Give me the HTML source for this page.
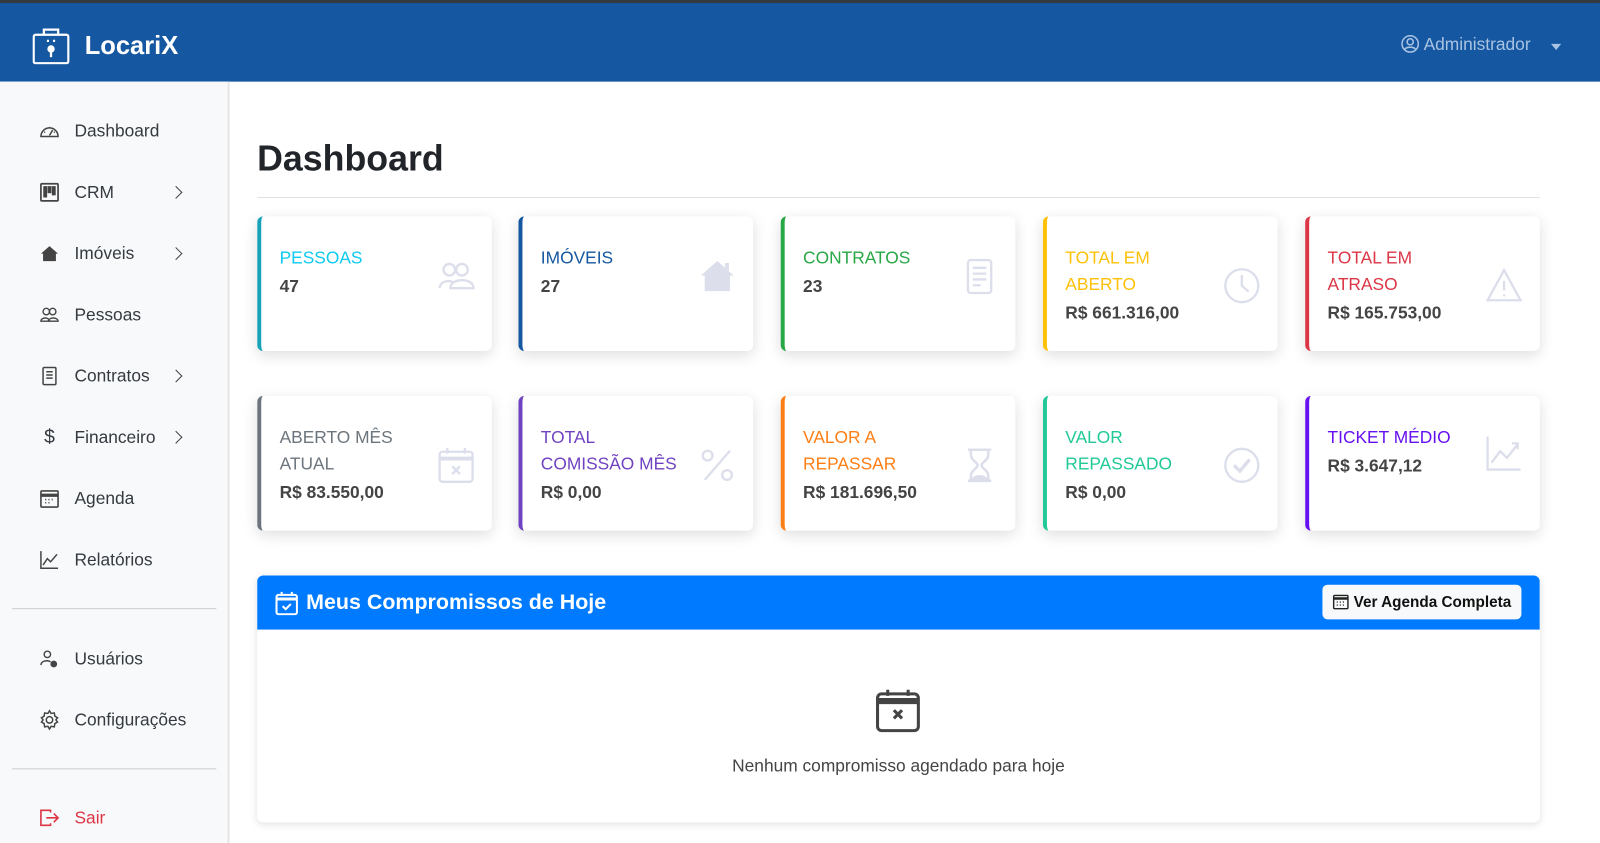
<!DOCTYPE html>
<html><head><meta charset="utf-8">
<style>
*{box-sizing:border-box;margin:0;padding:0}
body{width:1600px;height:826px;overflow:hidden;background:#fff;font-family:"Liberation Sans",sans-serif;color:#212529}
#w{position:relative;width:1568px;height:810px;transform:scale(1.0204);transform-origin:0 0}
.top{position:absolute;left:0;top:0;width:1568px;height:80px;background:#1557a0;border-top:3px solid #343a40}
.logo{position:absolute;left:32px;top:24px}
.brand{position:absolute;left:83px;top:28px;color:#fff;font-weight:bold;font-size:25px}
.admin{position:absolute;right:68px;top:31px;color:#a9c3e3;font-size:17px}
.caret{position:absolute;right:38px;top:40px;width:0;height:0;border-left:5px solid transparent;border-right:5px solid transparent;border-top:6px solid #a9c3e3}
.side{position:absolute;left:0;top:80px;width:225px;height:746px;background:#f8f9fa;border-right:2px solid #e6e6e6}
.nav{position:absolute;left:38px;font-size:17px;color:#343a40;display:flex;align-items:center}
.nav svg{width:21px;height:21px;margin-right:14px}
.chev{position:absolute;left:168px;width:9px;height:9px;border-right:1.6px solid #444;border-top:1.6px solid #444;transform:rotate(45deg)}
.hr{position:absolute;left:12px;width:200px;height:1px;background:#ccc}
h1{position:absolute;left:252px;top:136px;font-size:35px;font-weight:bold;color:#212529}
.line{position:absolute;left:252px;top:193px;width:1257px;height:1px;background:#dee2e6}
.card{position:absolute;width:230px;height:132px;background:#fff;border-radius:6px;box-shadow:0 4px 14px rgba(0,0,0,.13);border-left:4px solid}
.card .t{position:absolute;left:18px;top:28px;font-size:17px;line-height:26px}
.card .v{font-size:17px;font-weight:bold;color:#444;line-height:30px}
.card svg{position:absolute;right:16px;top:41px;width:38px;height:38px}
.panel{position:absolute;left:252px;top:564px;width:1257px;height:242px;background:#fff;border-radius:6px;box-shadow:0 2px 8px rgba(0,0,0,.12);overflow:hidden}
.ph{height:53px;background:#007bff;color:#fff;font-size:21px;font-weight:bold;display:flex;align-items:center;padding-left:18px}
.btn{position:absolute;right:18px;top:9px;height:34px;padding:0 10px;background:#f8f9fa;border-radius:5px;color:#111;font-size:15px;font-weight:bold;display:flex;align-items:center}
.empty{position:absolute;left:0;width:100%;top:177px;text-align:center;color:#444;font-size:17px}
</style></head><body><div id="w">
<div class="top">
<svg class="logo" width="36" height="36" viewBox="0 0 36 36" fill="none" stroke="#fff" stroke-width="2.2"><rect x="1" y="7" width="34" height="28" rx="2"/><path d="M11 7V2h14v5"/><path d="M14 13h2M20 13h2"/><circle cx="18" cy="21" r="2.5" fill="#fff"/><path d="M18 23v6"/></svg>
<div class="brand">LocariX</div>
<div class="admin"><svg width="18" height="18" viewBox="0 0 18 18" style="vertical-align:-3px;margin-right:4px" fill="none" stroke="#a9c3e3" stroke-width="1.5"><circle cx="9" cy="9" r="8"/><circle cx="9" cy="7" r="3"/><path d="M3.5 14.5c2-3 9-3 11 0"/></svg>Administrador</div>
<div class="caret"></div>
</div>
<div class="side">
<div class="nav" style="top:38px"><svg viewBox="0 0 20 20" fill="none" stroke="#444" stroke-width="1.4"><path d="M2 15a8 8 0 1 1 16 0z"/><path d="M10 14l3-5"/><path d="M5 11h1M10 6v1M14 11h1"/></svg>Dashboard</div>
<div class="nav" style="top:98px"><svg viewBox="0 0 20 20" fill="none" stroke="#444" stroke-width="1.6"><rect x="2" y="2" width="16" height="16" rx="1"/><rect x="5" y="5" width="2" height="9" fill="#444"/><rect x="9" y="5" width="2" height="5" fill="#444"/><rect x="13" y="5" width="2" height="7" fill="#444"/></svg>CRM</div><div class="chev" style="top:104px"></div>
<div class="nav" style="top:158px"><svg viewBox="0 0 20 20"><path d="M10 3l8 7h-2v7H4v-7H2z" fill="#444"/></svg>Imóveis</div><div class="chev" style="top:164px"></div>
<div class="nav" style="top:218px"><svg viewBox="0 0 20 20" fill="none" stroke="#444" stroke-width="1.3"><circle cx="7" cy="7" r="3"/><circle cx="13" cy="7" r="3"/><path d="M2 16c0-4 8-4 8 0zM9 16c0-4 9-4 9 0z"/></svg>Pessoas</div>
<div class="nav" style="top:278px"><svg viewBox="0 0 20 20" fill="none" stroke="#444" stroke-width="1.4"><rect x="4" y="2" width="12" height="16" rx="1"/><path d="M7 6h6M7 9h6M7 12h6"/></svg>Contratos</div><div class="chev" style="top:284px"></div>
<div class="nav" style="top:338px"><span style="width:21px;margin-right:14px;text-align:center;font-size:19px">$</span>Financeiro</div><div class="chev" style="top:344px"></div>
<div class="nav" style="top:398px"><svg viewBox="0 0 20 20" fill="none" stroke="#444" stroke-width="1.5"><rect x="2" y="3" width="16" height="15" rx="1"/><path d="M2 7h16" stroke-width="3"/><path d="M6 11h1M9 11h1M12 11h1M6 14h1M9 14h1"/></svg>Agenda</div>
<div class="nav" style="top:458px"><svg viewBox="0 0 20 20" fill="none" stroke="#444" stroke-width="1.4"><path d="M2 2v16h16"/><path d="M4 15l4-6 3 3 6-7"/></svg>Relatórios</div>
<div class="hr" style="top:516px"></div>
<div class="nav" style="top:555px"><svg viewBox="0 0 20 20" fill="none" stroke="#444" stroke-width="1.3"><circle cx="8" cy="6" r="3"/><path d="M2 16c0-4 6-5 9-3"/><circle cx="14" cy="15" r="2.5" fill="#444"/></svg>Usuários</div>
<div class="nav" style="top:615px"><svg viewBox="0 0 20 20" fill="none" stroke="#444" stroke-width="1.4"><circle cx="10" cy="10" r="3"/><path d="M10 1.5l1.5 2.5 3-.5.5 3 2.5 1.5-1.5 2 1.5 2-2.5 1.5-.5 3-3-.5L10 18.5 8.5 16l-3 .5-.5-3L2.5 12 4 10 2.5 8 5 6.5l.5-3 3 .5z"/></svg>Configurações</div>
<div class="hr" style="top:673px"></div>
<div class="nav" style="top:711px;color:#dc3545"><svg viewBox="0 0 20 20" fill="none" stroke="#dc3545" stroke-width="1.5"><path d="M11 5V3H2v14h9v-2"/><path d="M7 10h11M14 6l4 4-4 4"/></svg>Sair</div>
</div>
<h1>Dashboard</h1><div class="line"></div>

<div class="card" style="left:252px;top:212px;border-color:#17a2b8"><div class="t" style="color:#0dcaf0">PESSOAS<div class="v">47</div></div>
<svg style="top:40px" viewBox="0 0 40 40" fill="none" stroke="#dcdfeb" stroke-width="2.4"><circle cx="13" cy="13" r="6"/><circle cx="26" cy="13" r="6"/><path d="M3 32c0-8 12-9 15-5M14 32c0-11 24-11 24 0z"/></svg></div>
<div class="card" style="left:508px;top:212px;border-color:#1557a0"><div class="t" style="color:#1557a0">IMÓVEIS<div class="v">27</div></div>
<svg style="top:40px" viewBox="0 0 40 40"><path d="M20 4l17 15h-4v16H7V19H3z M28 6h4v8l-4-3z" fill="#dcdfeb"/></svg></div>
<div class="card" style="left:765px;top:212px;border-color:#28a745"><div class="t" style="color:#28a745">CONTRATOS<div class="v">23</div></div>
<svg style="top:40px" viewBox="0 0 40 40" fill="none" stroke="#dcdfeb" stroke-width="2.4"><rect x="8" y="3" width="24" height="34" rx="3"/><path d="M13 11h14M13 17h14M13 23h14M13 29h8"/></svg></div>
<div class="card" style="left:1022px;top:212px;border-color:#ffc107"><div class="t" style="color:#ffc107">TOTAL EM<br>ABERTO<div class="v">R$ 661.316,00</div></div>
<svg style="top:49px" viewBox="0 0 40 40" fill="none" stroke="#dcdfeb" stroke-width="2.4"><circle cx="20" cy="20" r="17"/><path d="M20 9v11l7 6"/></svg></div>
<div class="card" style="left:1279px;top:212px;border-color:#dc3545"><div class="t" style="color:#dc3545">TOTAL EM<br>ATRASO<div class="v">R$ 165.753,00</div></div>
<svg style="top:49px" viewBox="0 0 40 40" fill="none" stroke="#dcdfeb" stroke-width="2.4"><path d="M20 4L37 35H3z"/><path d="M20 15v10M20 29v2"/></svg></div>

<div class="card" style="left:252px;top:388px;border-color:#6c757d"><div class="t" style="color:#6c757d">ABERTO MÊS<br>ATUAL<div class="v">R$ 83.550,00</div></div>
<svg style="top:49px" viewBox="0 0 40 40" fill="none" stroke="#dcdfeb" stroke-width="2.4"><rect x="3" y="6" width="34" height="31" rx="3"/><path d="M3 13h34" stroke-width="4"/><path d="M11 2v6M29 2v6M16 21l8 8M24 21l-8 8"/></svg></div>
<div class="card" style="left:508px;top:388px;border-color:#6f42c1"><div class="t" style="color:#6f42c1">TOTAL<br>COMISSÃO MÊS<div class="v">R$ 0,00</div></div>
<svg style="top:49px" viewBox="0 0 40 40" fill="none" stroke="#dcdfeb" stroke-width="2.4"><circle cx="10" cy="10" r="5"/><circle cx="30" cy="30" r="5"/><path d="M33 5L7 35"/></svg></div>
<div class="card" style="left:765px;top:388px;border-color:#fd7e14"><div class="t" style="color:#fd7e14">VALOR A<br>REPASSAR<div class="v">R$ 181.696,50</div></div>
<svg style="top:49px" viewBox="0 0 40 40" fill="none" stroke="#dcdfeb" stroke-width="2.6"><path d="M8 4h24M8 36h24"/><path d="M11 4v5c0 6 7 8 7 11s-7 5-7 11v5M29 4v5c0 6-7 8-7 11s7 5 7 11v5"/><path d="M13 35c1-5 13-5 14 0z" fill="#dcdfeb"/></svg></div>
<div class="card" style="left:1022px;top:388px;border-color:#20c997"><div class="t" style="color:#20c997">VALOR<br>REPASSADO<div class="v">R$ 0,00</div></div>
<svg style="top:49px" viewBox="0 0 40 40" fill="none" stroke="#dcdfeb" stroke-width="2.4"><circle cx="20" cy="20" r="17"/><path d="M12 20l6 6 10-12" stroke-width="3.5"/></svg></div>
<div class="card" style="left:1279px;top:388px;border-color:#6610f2"><div class="t" style="color:#6610f2">TICKET MÉDIO<div class="v">R$ 3.647,12</div></div>
<svg style="top:37px" viewBox="0 0 40 40" fill="none" stroke="#dcdfeb" stroke-width="2.4"><path d="M3 3v34h34"/><path d="M7 30l9-12 7 7 11-14M28 10h6v6"/></svg></div>

<div class="panel"><div class="ph"><svg width="22" height="24" viewBox="0 0 22 24" fill="none" stroke="#fff" stroke-width="2" style="margin-right:8px"><rect x="1" y="4" width="20" height="19" rx="2"/><path d="M1 8h20" stroke-width="3"/><path d="M6 1v4M16 1v4M7 15l3 3 5-5"/></svg>Meus Compromissos de Hoje
<div class="btn"><svg width="16" height="16" viewBox="0 0 16 16" style="margin-right:5px" fill="none" stroke="#222" stroke-width="1.4"><rect x="1" y="1.5" width="14" height="13" rx="1"/><path d="M1 4.5h14" stroke-width="2.5"/><path d="M4 8h1M7 8h1M10 8h1M4 11h1M7 11h1M10 11h1"/></svg>Ver Agenda Completa</div></div>
<svg style="position:absolute;left:606px;top:110px" width="44" height="44" viewBox="0 0 44 44" fill="none" stroke="#444" stroke-width="3"><rect x="2" y="6" width="40" height="36" rx="4"/><path d="M2 13h40" stroke-width="6"/><path d="M12 2v6M32 2v6"/><path d="M18 22l8 8M26 22l-8 8"/></svg>
<div class="empty">Nenhum compromisso agendado para hoje</div>
</div>
</div></body></html>
